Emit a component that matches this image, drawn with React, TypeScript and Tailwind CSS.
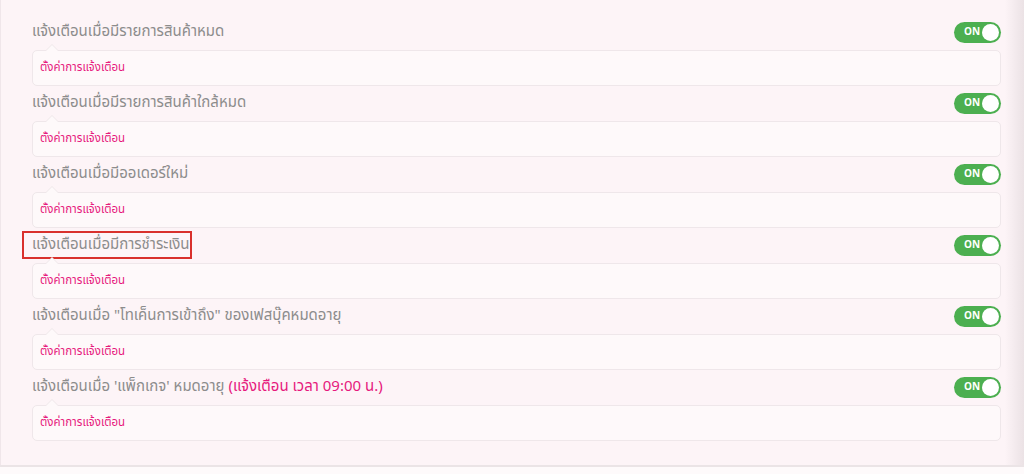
import React from 'react'

const rows: { title: React.ReactNode; highlight?: boolean }[] = [
  { title: 'แจ้งเตือนเมื่อมีรายการสินค้าหมด' },
  { title: 'แจ้งเตือนเมื่อมีรายการสินค้าใกล้หมด' },
  { title: 'แจ้งเตือนเมื่อมีออเดอร์ใหม่' },
  { title: 'แจ้งเตือนเมื่อมีการชำระเงิน', highlight: true },
  { title: 'แจ้งเตือนเมื่อ "โทเค็นการเข้าถึง" ของเฟสบุ๊คหมดอายุ' },
  {
    title: (
      <>
        แจ้งเตือนเมื่อ 'แพ็กเกจ' หมดอายุ{' '}
        <span className="text-[#e6197d]">(แจ้งเตือน เวลา 09:00 น.)</span>
      </>
    ),
  },
]

function Toggle() {
  return (
    <div className="flex items-center justify-between w-[47px] h-[21px] rounded-full bg-[#4caf50] pl-[10px] pr-[2px]">
      <span className="text-[10px] font-bold text-white leading-none">ON</span>
      <span className="w-[17px] h-[17px] rounded-full bg-white" />
    </div>
  )
}

function NotifyRow({ title, highlight }: { title: React.ReactNode; highlight?: boolean }) {
  return (
    <div className="flex flex-col">
      <div className="flex items-center justify-between h-[28px]">
        <div
          className={
            highlight
              ? 'text-[15px] text-[#8c8c8c] border-2 border-[#d9302c] -ml-[10px] pl-[8px] pr-[1px] h-[28px] flex items-center'
              : 'text-[15px] text-[#8c8c8c]'
          }
        >
          {title}
        </div>
        <Toggle />
      </div>
      <div className="relative mt-[4px] mb-[3px] h-[36px] rounded-[5px] border border-[#efe7ea] bg-[#fef9fa] flex items-center px-[7px]">
        <span className="absolute -top-[7px] left-[12px] w-0 h-0 border-l-[7px] border-r-[7px] border-b-[7px] border-l-transparent border-r-transparent border-b-[#efe7ea]" />
        <span className="absolute -top-[6px] left-[13px] w-0 h-0 border-l-[6px] border-r-[6px] border-b-[6px] border-l-transparent border-r-transparent border-b-[#fef9fa]" />
        <a className="text-[11.5px] text-[#e6197d] cursor-pointer">ตั้งค่าการแจ้งเตือน</a>
      </div>
    </div>
  )
}

export default function App() {
  return (
    <div
      className="w-[1024px] h-[474px] overflow-hidden flex flex-col bg-[#fdf4f7]"
      style={{ fontFamily: '"Noto Sans Thai", "Noto Sans", "Liberation Sans", sans-serif' }}
    >
      <div className="flex flex-1">
        <div className="flex-1 pt-[18px] pl-[31px] pr-[4px] border-l border-[#f0e6ea]">
          {rows.map((r, i) => (
            <NotifyRow key={i} title={r.title} highlight={r.highlight} />
          ))}
        </div>
        <div className="w-[19px] bg-gradient-to-r from-[#fdf4f7] to-[#ebe2e5]" />
      </div>
      <div className="h-[9px] border-t-2 border-[#ebe4e6] bg-[#fefafb]" />
    </div>
  )
}
